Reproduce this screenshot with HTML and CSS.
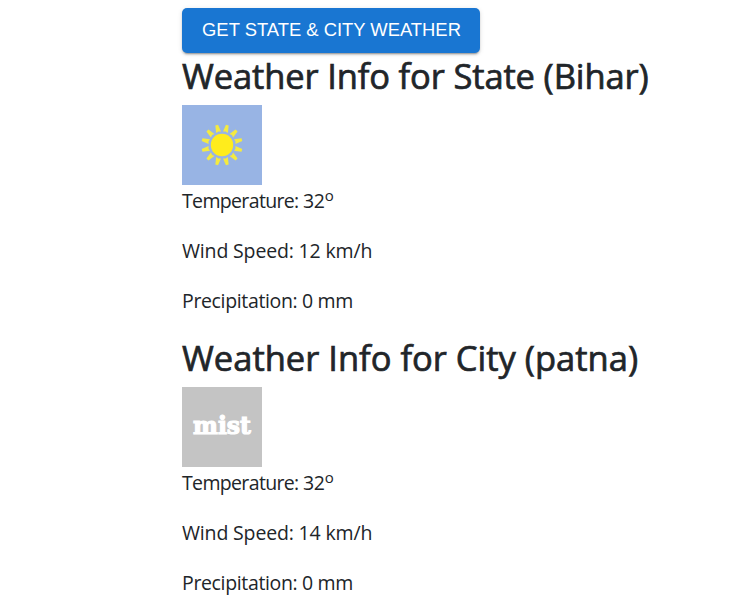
FILE: index.html
```html
<!DOCTYPE html>
<html lang="en">
<head>
<meta charset="utf-8">
<title>Weather</title>
<link rel="stylesheet" href="styles.css">
</head>
<body>
<main class="weather">
  <button class="fetch" type="button">GET STATE &amp; CITY WEATHER</button>
  <section class="report">
    <h2 class="title state-title">Weather Info for State (Bihar)</h2>
    <svg class="icon" viewBox="0 0 80 80" role="img" aria-label="Sunny">
      <rect width="80" height="80" fill="#98b4e4"/>
      <circle cx="40" cy="40" r="11.2" fill="#ffec1c"/>
      <g fill="#f4ea40" transform="rotate(15 40 40)">
        <path id="ray" d="M37.5 26.8 L38.6 19.4 L41.4 19.4 L42.5 26.8 L40 26Z"/>
        <use href="#ray" transform="rotate(30 40 40)"/>
        <use href="#ray" transform="rotate(60 40 40)"/>
        <use href="#ray" transform="rotate(90 40 40)"/>
        <use href="#ray" transform="rotate(120 40 40)"/>
        <use href="#ray" transform="rotate(150 40 40)"/>
        <use href="#ray" transform="rotate(180 40 40)"/>
        <use href="#ray" transform="rotate(210 40 40)"/>
        <use href="#ray" transform="rotate(240 40 40)"/>
        <use href="#ray" transform="rotate(270 40 40)"/>
        <use href="#ray" transform="rotate(300 40 40)"/>
        <use href="#ray" transform="rotate(330 40 40)"/>
      </g>
    </svg>
    <p class="line temp">Temperature: <span class="degrees">32<sup>o</sup></span></p>
    <p class="line wind">Wind Speed: 12 km/h</p>
    <p class="line rain">Precipitation: 0 mm</p>
  </section>
  <section class="report">
    <h2 class="title city-title">Weather Info for City (patna)</h2>
    <div class="icon mist"><span class="mist-label">mist</span></div>
    <p class="line temp">Temperature: <span class="degrees">32<sup>o</sup></span></p>
    <p class="line wind">Wind Speed: 14 km/h</p>
    <p class="line rain">Precipitation: 0 mm</p>
  </section>
</main>
</body>
</html>
```
FILE: styles.css
```css
body { margin: 0; background: #fff; color: #212529; font-family: "Open Sans", sans-serif; }
.weather { margin-left: 182px; padding-top: 8px; }
.fetch { display: block; width: 298px; height: 45px; padding: 0 0 2px 1px; border: 0; border-radius: 5px; background: #1976d2; color: #fff; font: 500 18.4px/43px "Liberation Sans", Arial, sans-serif; white-space: nowrap; box-shadow: 0 3px 1px -2px rgba(0,0,0,.2), 0 2px 2px rgba(0,0,0,.14), 0 1px 5px rgba(0,0,0,.12); }
.report { height: 282px; }
.title { margin: 0; height: 52px; font-size: 34.5px; font-weight: 500; line-height: 45px; white-space: nowrap; -webkit-text-stroke: .7px #212529; }
.state-title { letter-spacing: -.14px; }
.city-title { letter-spacing: 0; }
.icon { display: block; width: 80px; height: 80px; }
.line { margin: 0 0 20px; padding-top: 1px; box-sizing: border-box; height: 30px; font-size: 19.5px; line-height: 30px; white-space: nowrap; }
.temp { letter-spacing: -.65px; }
.degrees { letter-spacing: -.3px; }
.wind { letter-spacing: -.16px; }
.rain { letter-spacing: -.35px; }
.line sup { font-size: 15px; line-height: 0; position: relative; top: -.45em; vertical-align: baseline; }
.mist { display: flex; align-items: center; justify-content: center; background: #c4c4c4; }
.mist-label { color: #fff; font: 900 23.5px/1 "DejaVu Serif", serif; -webkit-text-stroke: 1.2px #fff; }
```
